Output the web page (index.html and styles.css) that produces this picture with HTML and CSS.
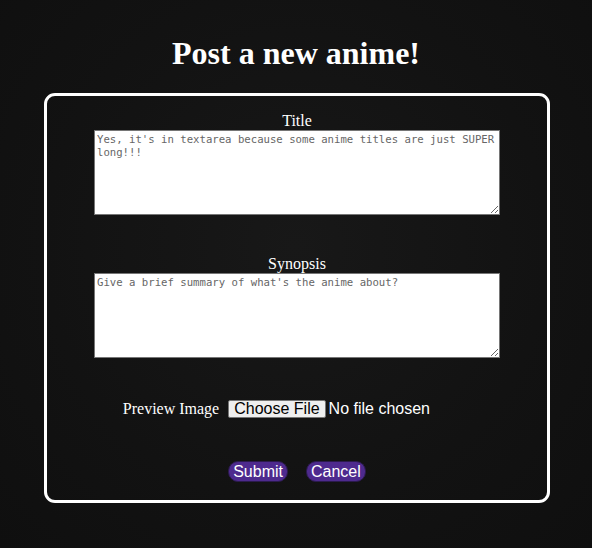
FILE: index.html
```html
<!DOCTYPE html>
<html lang="en">
<head>
<meta charset="utf-8">
<title>Post a new anime!</title>
<link rel="stylesheet" href="styles.css">
</head>
<body>
<main class="page">
  <h1 class="page-title">Post a new anime!</h1>
  <form class="card">
    <label class="field-label" for="title">Title</label>
    <textarea class="field-text" id="title" placeholder="Yes, it's in textarea because some anime titles are just SUPER long!!!"></textarea>
    <label class="field-label field-label-gap" for="synopsis">Synopsis</label>
    <textarea class="field-text" id="synopsis" placeholder="Give a brief summary of what's the anime about?"></textarea>
    <div class="file-row">
      <label class="file-label" for="preview">Preview Image</label>
      <input class="file-input" type="file" id="preview">
    </div>
    <div class="actions">
      <button class="pill" type="submit">Submit</button>
      <button class="pill" type="button">Cancel</button>
    </div>
  </form>
</main>
</body>
</html>
```
FILE: styles.css
```css
html, body {
  margin: 0;
  padding: 0;
  height: 100%;
}
body {
  background: radial-gradient(ellipse at 50% 45%, #181818 0%, #121212 60%, #0f0f0f 100%);
  color: #fff;
  font-family: "Liberation Serif", "Times New Roman", serif;
}
.page {
  padding-top: 35px;
  display: flex;
  flex-direction: column;
  align-items: center;
}
.page-title {
  margin: 0 0 21px 0;
  font-size: 32px;
  font-weight: bold;
  line-height: 37px;
  text-align: center;
}
.card {
  box-sizing: border-box;
  width: 506px;
  margin-left: 2px;
  border: 3px solid #fff;
  border-radius: 11px;
  padding: 16px 0 18px;
  display: flex;
  flex-direction: column;
  align-items: center;
  background: transparent;
}
.field-label {
  font-size: 16px;
  line-height: 18px;
  height: 18px;
}
.field-label-gap {
  margin-top: 40px;
}
.field-text {
  box-sizing: border-box;
  width: 406px;
  height: 85px;
  margin: 0;
  padding: 2px;
  border: 1px solid #767676;
  background: #fff;
  color: #000;
  font-family: "DejaVu Sans Mono", monospace;
  font-size: 10.65px;
  line-height: 13px;
  resize: both;
}
.field-text::placeholder {
  color: #666;
}
.file-row {
  margin-top: 42px;
  display: flex;
  align-items: baseline;
  height: 18px;
}
.file-label {
  font-size: 16px;
  margin-right: 9px;
}
.file-input {
  width: 243px;
  color: #fff;
  font-family: "Liberation Sans", Arial, sans-serif;
  font-size: 16px;
  line-height: 16px;
}
.file-input::file-selector-button {
  font: inherit;
  line-height: 16px;
  height: 18px;
  padding: 0 5px;
  margin: 0 3px 0 0;
  border: 1px solid #767676;
  border-radius: 2px;
  background: #efefef;
  color: #000;
}
.actions {
  margin-top: 43px;
  display: flex;
  gap: 18px;
}
.pill {
  height: 21px;
  padding: 0 4px;
  border: 1px solid #2b1a4d;
  border-radius: 10px;
  background: #4e2a8e;
  color: #fff;
  font-family: "Liberation Sans", Arial, sans-serif;
  font-size: 16px;
  line-height: 18px;
}
```
